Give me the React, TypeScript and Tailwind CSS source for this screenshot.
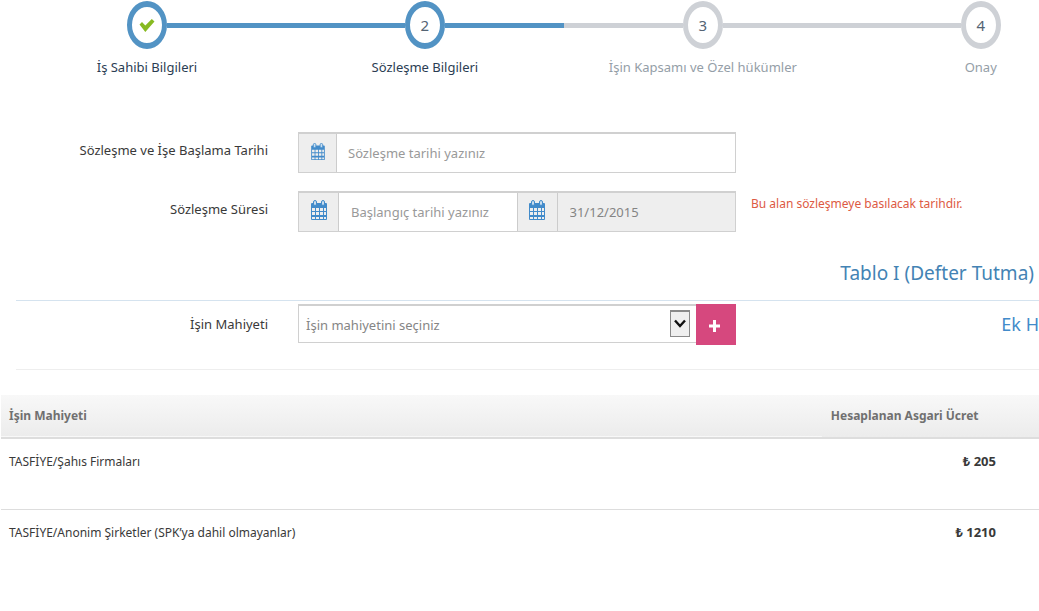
import clsx from 'clsx';

type StepState = 'done' | 'active' | 'pending';

interface Step {
  title: string;
  state: StepState;
}

const steps: Step[] = [
  { title: 'İş Sahibi Bilgileri', state: 'done' },
  { title: 'Sözleşme Bilgileri', state: 'active' },
  { title: 'İşin Kapsamı ve Özel hükümler', state: 'pending' },
  { title: 'Onay', state: 'pending' },
];

const fees = [
  { name: 'TASFİYE/Şahıs Firmaları', amount: 205 },
  { name: 'TASFİYE/Anonim Şirketler (SPK’ya dahil olmayanlar)', amount: 1210 },
];

function CalendarIcon({ className }: { className: string }) {
  return (
    <svg viewBox="0 0 16 20" className={className} aria-hidden="true">
      <path fill="#428bca" d="M0 4a1 1 0 0 1 1-1h14a1 1 0 0 1 1 1v15a1 1 0 0 1-1 1H1a1 1 0 0 1-1-1z" />
      <path
        fill="#eee"
        d="M1 8h3v3H1zM5 8h3v3H5zM9 8h3v3H9zM13 8h2v3h-2zM1 12h3v3H1zM5 12h3v3H5zM9 12h3v3H9zM13 12h2v3h-2zM1 17h3v2H1zM5 17h3v2H5zM9 17h3v2H9zM13 17h2v2h-2z"
      />
      <rect x="2.5" y="0.5" width="3" height="5" rx="1.5" fill="#c9def0" stroke="#428bca" />
      <rect x="10.5" y="0.5" width="3" height="5" rx="1.5" fill="#c9def0" stroke="#428bca" />
    </svg>
  );
}

function CheckIcon() {
  return (
    <svg viewBox="0 0 16 16" className="h-4 w-4" aria-hidden="true">
      <path fill="#87ba21" d="M.5 7.5 3 5l3.3 3.6L12.8 2 15.5 4.6 6.3 15z" />
    </svg>
  );
}

function Stepper() {
  return (
    <ol className="ml-2 grid w-[107%] grid-cols-4 pt-px">
      {steps.map((step, index) => {
        const reached = step.state !== 'pending';
        const line = reached ? 'bg-[#5293c4]' : 'bg-[#ced1d6]';
        return (
          <li key={step.title} className="flex flex-col">
            <div className="flex items-center">
              <span className={clsx('h-[5px] flex-1', index === 0 ? 'bg-transparent' : line)} />
              <span
                className={clsx(
                  'flex h-12 w-10 items-center justify-center rounded-[50%] border-x-[5px] border-y-[6px] text-[15px] text-[#546474]',
                  reached ? 'border-[#5293c4]' : 'border-[#ced1d6]',
                )}
              >
                {step.state === 'done' ? <CheckIcon /> : index + 1}
              </span>
              <span className={clsx('h-[5px] flex-1', index === steps.length - 1 ? 'bg-transparent' : line)} />
            </div>
            <span
              className={clsx(
                'mt-2 text-center text-[13px] leading-5',
                reached ? 'text-[#2b3d53]' : 'text-[#949ea7]',
              )}
            >
              {step.title}
            </span>
          </li>
        );
      })}
    </ol>
  );
}

const rowClass = 'grid grid-cols-[298fr_438fr_303fr]';
const labelClass = 'pt-2 pr-[30px] text-right text-[13px] leading-5';
const addonClass = 'flex shrink-0 items-center justify-center border-r border-[#ccc] bg-[#eee] pb-1';
const groupClass = 'flex h-[41px] min-w-0 border border-t-2 border-[#d0d0d0]';

export default function App() {
  return (
    <main className="overflow-hidden bg-white pb-4 font-['Noto_Sans',sans-serif] text-[13px] text-[#393939]">
      <Stepper />

      <form className="mt-[55px]">
        <div className={rowClass}>
          <label htmlFor="start" className={labelClass}>
            Sözleşme ve İşe Başlama Tarihi
          </label>
          <div className={groupClass}>
            <span className={clsx(addonClass, 'w-[38px]')}>
              <CalendarIcon className="h-[17px] w-[14px]" />
            </span>
            <input
              id="start"
              type="text"
              placeholder="Sözleşme tarihi yazınız"
              className="min-w-0 flex-1 px-[11px] pt-0.5 outline-none placeholder:text-[#999]"
            />
          </div>
        </div>

        <div className={clsx(rowClass, 'mt-[18px]')}>
          <label htmlFor="period" className={labelClass}>
            Sözleşme Süresi
          </label>
          <div className={groupClass}>
            <span className={clsx(addonClass, 'w-10')}>
              <CalendarIcon className="h-5 w-4" />
            </span>
            <input
              id="period"
              type="text"
              placeholder="Başlangıç tarihi yazınız"
              className="w-0 min-w-0 flex-1 px-3 pt-0.5 outline-none placeholder:text-[#999]"
            />
            <span className={clsx(addonClass, 'w-[41px] border-l')}>
              <CalendarIcon className="h-5 w-4" />
            </span>
            <input
              type="text"
              aria-label="Bitiş tarihi"
              readOnly
              value="31/12/2015"
              className="w-0 min-w-0 flex-1 bg-[#eee] px-3 pt-0.5 text-[#848484] outline-none"
            />
          </div>
          <p className="pt-[3px] pl-[15px] text-xs leading-5 text-[#dd5a43]">Bu alan sözleşmeye basılacak tarihdir.</p>
        </div>

        <h3 className="mt-[26px] ml-4 border-b border-[#d5e3ef] pr-[5px] pb-3 text-right text-[19px] leading-[30px] text-[#4383b4]">
          Tablo I (Defter Tutma)
        </h3>

        <div className={clsx(rowClass, 'mt-[3px]')}>
          <label htmlFor="kind" className={clsx(labelClass, 'pt-[10px]')}>
            İşin Mahiyeti
          </label>
          <div className="flex items-start">
            <div className="relative min-w-0 flex-1">
              <select
                id="kind"
                defaultValue=""
                className="h-[39px] w-full appearance-none border border-t-2 border-r-0 border-[#d0d0d0] bg-white px-[7px] pt-1 text-[#858585] outline-none"
              >
                <option value="">İşin mahiyetini seçiniz</option>
              </select>
              <span className="pointer-events-none absolute top-1.5 right-1.5 flex h-[27px] w-5 items-center justify-center border border-t-2 border-[#8a8a8a] bg-[#efefef]">
                <svg viewBox="0 0 12 10" className="h-[10px] w-3" aria-hidden="true">
                  <path d="M1 1.5 6 7l5-5.5" fill="none" stroke="#111" strokeWidth="2.4" />
                </svg>
              </span>
            </div>
            <button
              type="button"
              aria-label="Ekle"
              className="flex h-[41px] w-10 items-center justify-center bg-[#d6487e] pt-0.5 pr-[3px] text-white"
            >
              <svg viewBox="0 0 11 12" className="h-3 w-[11px]" aria-hidden="true">
                <path d="M4 0h3v4.5h4v3H7V12H4V7.5H0v-3h4z" fill="currentColor" />
              </svg>
            </button>
          </div>
          <p className="overflow-hidden text-right text-lg leading-10 whitespace-nowrap text-[#428bca]">Ek H</p>
        </div>
        <hr className="mt-6 ml-4 border-[#eee]" />
      </form>

      <table className="mt-[25px] ml-px w-full table-fixed border-collapse">
        <thead>
          <tr className="h-[43px] border-b-2 border-[#ddd] bg-linear-to-b from-[#f8f8f8] to-[#ececec] text-left text-xs text-[#707070]">
            <th className="w-[79%] px-2">İşin Mahiyeti</th>
            <th className="px-[9px]">Hesaplanan Asgari Ücret</th>
          </tr>
        </thead>
        <tbody>
          {fees.map((fee) => (
            <tr key={fee.name} className="h-[71px] border-b border-[#ddd] align-top leading-5 last:border-b-0">
              <td className="px-2 pt-[13px] text-xs leading-5">{fee.name}</td>
              <td className="pt-3 pr-11 text-right font-bold">₺ {fee.amount}</td>
            </tr>
          ))}
        </tbody>
      </table>
    </main>
  );
}
